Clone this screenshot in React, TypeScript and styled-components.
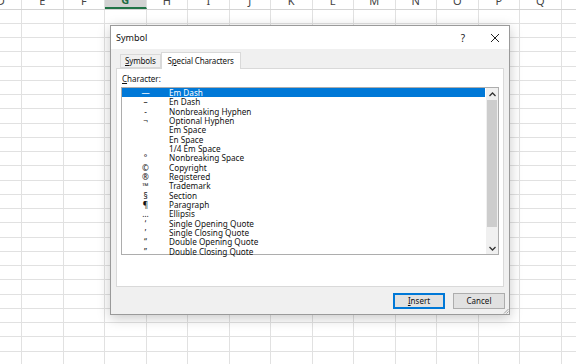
import { createGlobalStyle, styled } from "styled-components";

const GlobalStyle = createGlobalStyle`
  html, body {
    margin: 0;
    padding: 0;
    overflow: hidden;
    background: #ffffff;
  }
  body {
    font-family: "Noto Sans", "Open Sans", sans-serif;
  }
`;

const COL_W = 41.5;
const ROW_H = 14.25;
const COLS = ["D", "E", "F", "G", "H", "I", "J", "K", "L", "M", "N", "O", "P", "Q", "R"];
const ROWS = 26;

const Page = styled.div`
  position: relative;
  width: 576px;
  height: 364px;
  overflow: hidden;
  background: #fff;
`;

const Sheet = styled.div`
  margin-left: -19.5px;
  margin-top: -7px;
`;

const HeaderRow = styled.div`
  display: grid;
  grid-template-columns: repeat(${COLS.length}, ${COL_W}px);
  height: 16.5px;
  border-bottom: 1px solid #d4d4d4;
  box-sizing: border-box;
`;

const HeaderCell = styled.div<{ $active?: boolean }>`
  display: flex;
  align-items: center;
  justify-content: center;
  box-sizing: border-box;
  border-right: 1px solid #e1e1e1;
  font-size: 11px;
  line-height: 12px;
  color: ${(p) => (p.$active ? "#1e6b41" : "#444")};
  font-weight: ${(p) => (p.$active ? 700 : 400)};
  background: ${(p) => (p.$active ? "#d2d2d2" : "#fff")};
  border-bottom: ${(p) => (p.$active ? "2px solid #217346" : "none")};
`;

const Grid = styled.div`
  display: grid;
  grid-template-columns: repeat(${COLS.length}, ${COL_W}px);
  grid-auto-rows: ${ROW_H}px;
`;

const Cell = styled.div`
  box-sizing: border-box;
  border-right: 1px solid #e1e1e1;
  border-bottom: 1px solid #e1e1e1;
`;

const Dialog = styled.div`
  position: absolute;
  left: 110px;
  top: 25px;
  width: 400px;
  height: 290px;
  box-sizing: border-box;
  border: 1px solid #9a9a9a;
  background: #f0f0f0;
  box-shadow: 0 3px 12px rgba(0, 0, 0, 0.22);
  display: flex;
  flex-direction: column;
`;

const TitleBar = styled.div`
  height: 23px;
  background: #fff;
  display: flex;
  align-items: center;
  padding-left: 5px;
  padding-right: 3px;
  font-size: 9px;
  color: #111;
`;

const Title = styled.div`
  flex: 1;
`;

const TitleButton = styled.div`
  width: 22px;
  display: flex;
  justify-content: center;
  align-items: center;
  font-size: 10px;
  color: #222;
  margin-left: 10px;
`;

const Body = styled.div`
  flex: 1;
  display: flex;
  flex-direction: column;
  padding: 3px 5px 5px 5px;
`;

const Tabs = styled.div`
  display: flex;
  align-items: flex-end;
  height: 16px;
  padding-left: 4px;
  position: relative;
  z-index: 1;
`;

const Tab = styled.div<{ $active?: boolean }>`
  box-sizing: border-box;
  height: ${(p) => (p.$active ? "17px" : "14px")};
  padding: 0 ${(p) => (p.$active ? "6px" : "4px")};
  display: flex;
  align-items: center;
  font-size: 8px;
  letter-spacing: -0.15px;
  line-height: 10px;
  color: #111;
  background: ${(p) => (p.$active ? "#fff" : "#f0f0f0")};
  border: 1px solid #d9d9d9;
  border-bottom: ${(p) => (p.$active ? "none" : "1px solid #d9d9d9")};
  margin-bottom: ${(p) => (p.$active ? "-1px" : "0")};
`;

const Panel = styled.div`
  height: 219px;
  box-sizing: border-box;
  background: #fff;
  border: 1px solid #d9d9d9;
  padding: 4px 4px 0 4px;
`;

const Label = styled.div`
  font-size: 8px;
  color: #111;
  height: 14px;
  line-height: 12px;
  padding-left: 1px;
`;

const ListBox = styled.div`
  height: 168px;
  box-sizing: border-box;
  border: 1px solid #adadad;
  display: flex;
`;

const Rows = styled.div`
  flex: 1;
  padding-right: 1px;
`;

const Row = styled.div<{ $selected?: boolean }>`
  display: flex;
  height: 9.33px;
  align-items: center;
  font-size: 8.2px;
  line-height: 9.33px;
  background: ${(p) => (p.$selected ? "#0078d7" : "transparent")};
  color: ${(p) => (p.$selected ? "#fff" : "#111")};
`;

const Glyph = styled.div`
  width: 47px;
  text-align: center;
`;

const Name = styled.div`
  white-space: nowrap;
`;

const ScrollBar = styled.div`
  width: 12px;
  background: #f0f0f0;
  display: flex;
  flex-direction: column;
`;

const ScrollArrow = styled.div`
  height: 12px;
  display: flex;
  align-items: center;
  justify-content: center;
`;

const Thumb = styled.div`
  height: 127px;
  margin: 0 1px;
  background: #cdcdcd;
`;

const Track = styled.div`
  flex: 1;
`;

const ButtonRow = styled.div`
  display: flex;
  justify-content: flex-end;
  gap: 8px;
  margin-top: 6px;
  margin-right: -1px;
`;

const Button = styled.div<{ $default?: boolean }>`
  width: 52px;
  height: 16px;
  box-sizing: border-box;
  display: flex;
  align-items: center;
  justify-content: center;
  font-size: 8px;
  line-height: 10px;
  color: #111;
  background: #e1e1e1;
  border: ${(p) => (p.$default ? "2px solid #0078d7" : "1px solid #adadad")};
`;

const Grip = styled.svg`
  position: absolute;
  right: 0;
  bottom: 0;
`;

const items: [string, string][] = [
  ["\u2014", "Em Dash"],
  ["\u2013", "En Dash"],
  ["-", "Nonbreaking Hyphen"],
  ["\u00ac", "Optional Hyphen"],
  ["", "Em Space"],
  ["", "En Space"],
  ["", "1/4 Em Space"],
  ["\u00b0", "Nonbreaking Space"],
  ["\u00a9", "Copyright"],
  ["\u00ae", "Registered"],
  ["\u2122", "Trademark"],
  ["\u00a7", "Section"],
  ["\u00b6", "Paragraph"],
  ["\u2026", "Ellipsis"],
  ["\u2018", "Single Opening Quote"],
  ["\u2019", "Single Closing Quote"],
  ["\u201c", "Double Opening Quote"],
  ["\u201d", "Double Closing Quote"],
];

export default function App() {
  return (
    <Page>
      <GlobalStyle />
      <Sheet>
        <HeaderRow>
          {COLS.map((c) => (
            <HeaderCell key={c} $active={c === "G"}>
              {c}
            </HeaderCell>
          ))}
        </HeaderRow>
        <Grid>
          {Array.from({ length: ROWS * COLS.length }).map((_, i) => (
            <Cell key={i} />
          ))}
        </Grid>
      </Sheet>

      <Dialog>
        <TitleBar>
          <Title>Symbol</Title>
          <TitleButton>?</TitleButton>
          <TitleButton>
            <svg width="10" height="10" viewBox="0 0 10 10">
              <path d="M1 1 L9 9 M9 1 L1 9" stroke="#222" strokeWidth="1" />
            </svg>
          </TitleButton>
        </TitleBar>
        <Body>
          <Tabs>
            <Tab>
              <span>
                <u>S</u>ymbols
              </span>
            </Tab>
            <Tab $active>
              <span>
                S<u>p</u>ecial Characters
              </span>
            </Tab>
          </Tabs>
          <Panel>
            <Label>
              <u>C</u>haracter:
            </Label>
            <ListBox>
              <Rows>
                {items.map(([g, n], i) => (
                  <Row key={n} $selected={i === 0}>
                    <Glyph>{g}</Glyph>
                    <Name>{n}</Name>
                  </Row>
                ))}
              </Rows>
              <ScrollBar>
                <ScrollArrow>
                  <svg width="7" height="5" viewBox="0 0 7 5">
                    <path d="M0.5 4 L3.5 1 L6.5 4" stroke="#333" strokeWidth="1.3" fill="none" />
                  </svg>
                </ScrollArrow>
                <Thumb />
                <Track />
                <ScrollArrow>
                  <svg width="7" height="5" viewBox="0 0 7 5">
                    <path d="M0.5 1 L3.5 4 L6.5 1" stroke="#333" strokeWidth="1.3" fill="none" />
                  </svg>
                </ScrollArrow>
              </ScrollBar>
            </ListBox>
          </Panel>
          <ButtonRow>
            <Button $default>
              <span>
                <u>I</u>nsert
              </span>
            </Button>
            <Button>Cancel</Button>
          </ButtonRow>
        </Body>
        <Grip width="6" height="6" viewBox="0 0 6 6">
          <path d="M5.5 1 L1 5.5 M5.5 3.5 L3.5 5.5" stroke="#a0a0a0" strokeWidth="1" />
        </Grip>
      </Dialog>
    </Page>
  );
}
